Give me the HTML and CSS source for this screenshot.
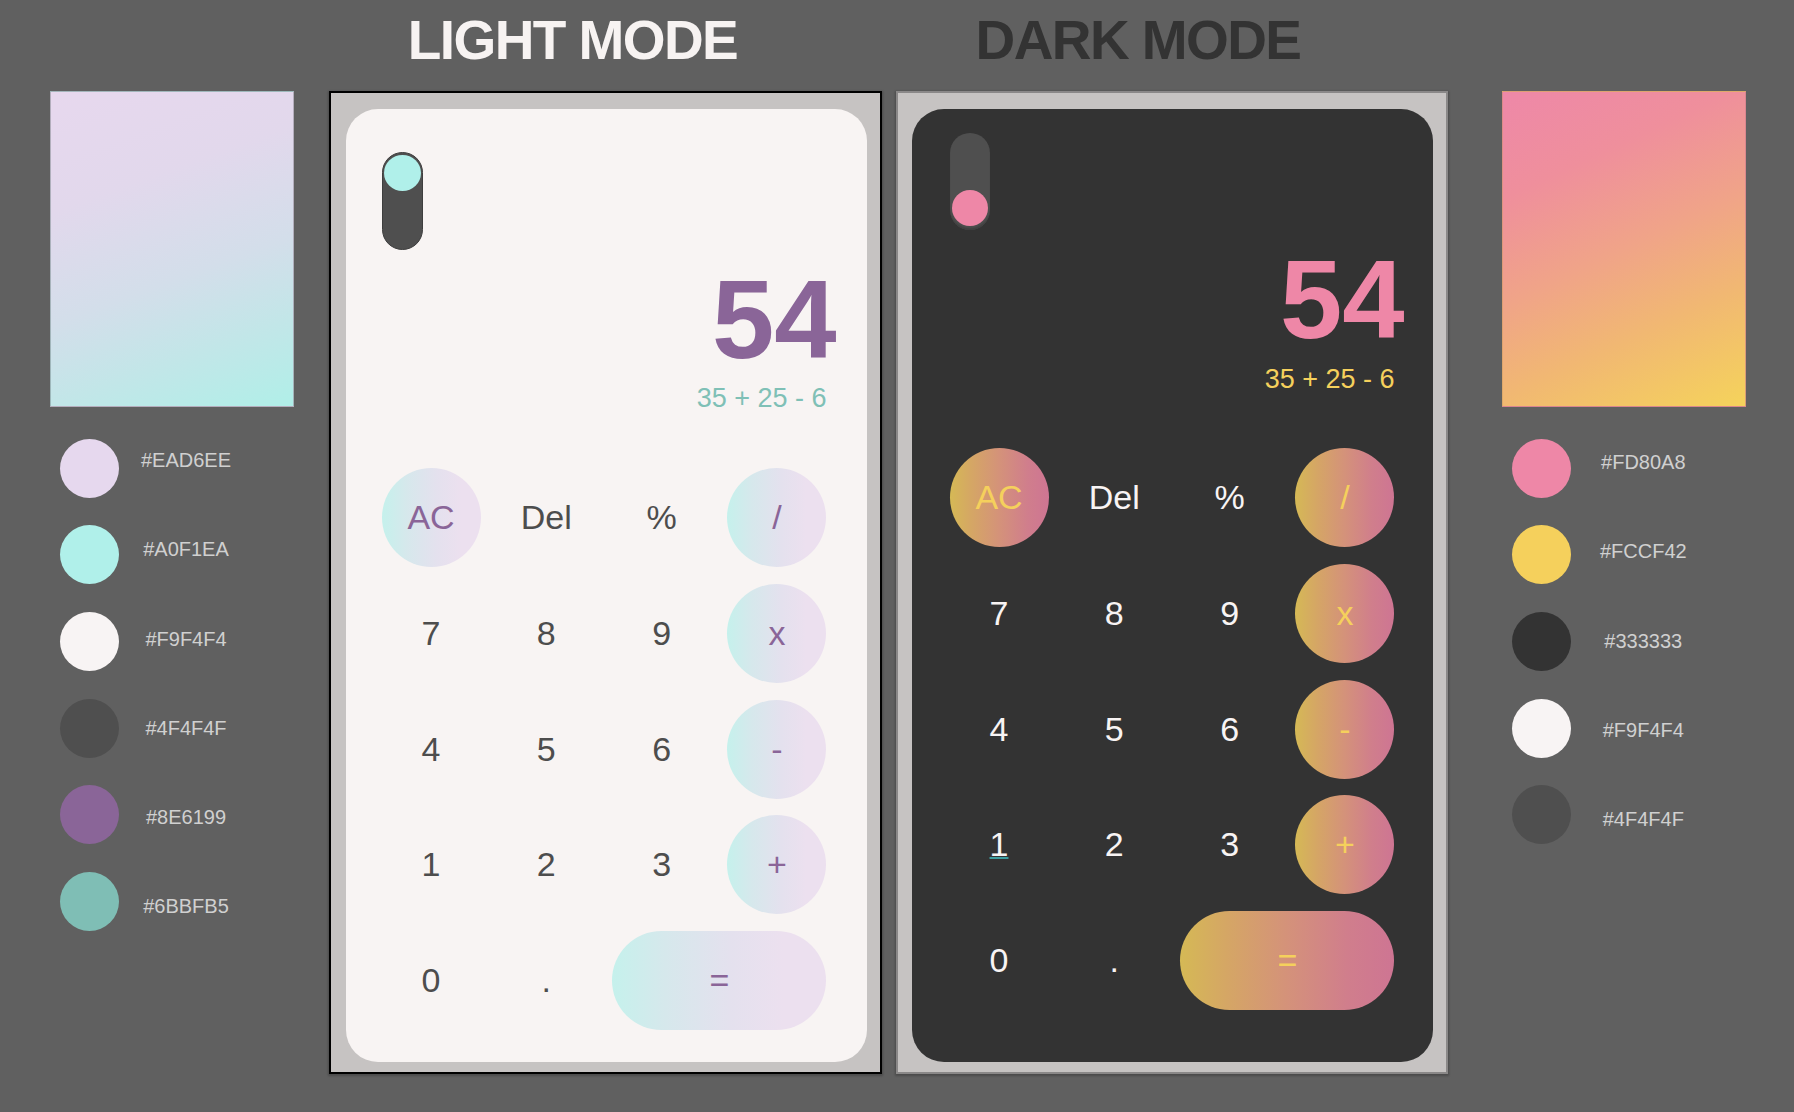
FILE: index.html
```html
<!DOCTYPE html>
<html lang="en">
<head>
<meta charset="utf-8">
<title>Calculator – Light &amp; Dark Mode</title>
<link rel="stylesheet" href="styles.css">
</head>
<body>
<div class="page">
  <aside class="palette palette--light">
    <div class="swatch swatch--light"></div>
    <div class="palette-list">
      <div class="dots">
        <span class="dot dot--lavender"></span>
        <span class="dot dot--aqua"></span>
        <span class="dot dot--white"></span>
        <span class="dot dot--grey"></span>
        <span class="dot dot--purple"></span>
        <span class="dot dot--teal"></span>
      </div>
      <div class="labels labels--light">
        <span class="label">#EAD6EE</span>
        <span class="label">#A0F1EA</span>
        <span class="label">#F9F4F4</span>
        <span class="label">#4F4F4F</span>
        <span class="label">#8E6199</span>
        <span class="label">#6BBFB5</span>
      </div>
    </div>
  </aside>

  <section class="mode mode--light">
    <h1 class="mode-title mode-title--light">LIGHT MODE</h1>
    <div class="frame frame--light">
      <div class="calc calc--light">
        <div class="toggle toggle--light"><span class="knob knob--light"></span></div>
        <div class="display">
          <div class="result">54</div>
          <div class="expr">35 + 25 - 6</div>
        </div>
        <div class="keys">
          <div class="key key--accent">AC</div>
          <div class="key">Del</div>
          <div class="key">%</div>
          <div class="key key--accent">/</div>
          <div class="key">7</div>
          <div class="key">8</div>
          <div class="key">9</div>
          <div class="key key--accent">x</div>
          <div class="key">4</div>
          <div class="key">5</div>
          <div class="key">6</div>
          <div class="key key--accent">-</div>
          <div class="key">1</div>
          <div class="key">2</div>
          <div class="key">3</div>
          <div class="key key--accent">+</div>
          <div class="key">0</div>
          <div class="key">.</div>
          <div class="key key--accent key--wide">=</div>
        </div>
      </div>
    </div>
  </section>

  <section class="mode mode--dark">
    <h1 class="mode-title mode-title--dark">DARK MODE</h1>
    <div class="frame frame--dark">
      <div class="calc calc--dark">
        <div class="toggle toggle--dark"><span class="knob knob--dark"></span></div>
        <div class="display">
          <div class="result">54</div>
          <div class="expr">35 + 25 - 6</div>
        </div>
        <div class="keys">
          <div class="key key--accent">AC</div>
          <div class="key">Del</div>
          <div class="key">%</div>
          <div class="key key--accent">/</div>
          <div class="key">7</div>
          <div class="key">8</div>
          <div class="key">9</div>
          <div class="key key--accent">x</div>
          <div class="key">4</div>
          <div class="key">5</div>
          <div class="key">6</div>
          <div class="key key--accent">-</div>
          <div class="key"><span class="focus-mark">1</span></div>
          <div class="key">2</div>
          <div class="key">3</div>
          <div class="key key--accent">+</div>
          <div class="key">0</div>
          <div class="key">.</div>
          <div class="key key--accent key--wide">=</div>
        </div>
      </div>
    </div>
  </section>

  <aside class="palette palette--dark">
    <div class="swatch swatch--dark"></div>
    <div class="palette-list">
      <div class="dots">
        <span class="dot dot--pink"></span>
        <span class="dot dot--yellow"></span>
        <span class="dot dot--charcoal"></span>
        <span class="dot dot--white"></span>
        <span class="dot dot--grey"></span>
      </div>
      <div class="labels labels--dark">
        <span class="label">#FD80A8</span>
        <span class="label">#FCCF42</span>
        <span class="label">#333333</span>
        <span class="label">#F9F4F4</span>
        <span class="label">#4F4F4F</span>
      </div>
    </div>
  </aside>
</div>
</body>
</html>
```

FILE: styles.css
```css
* { box-sizing: border-box; }

html, body {
  margin: 0;
  padding: 0;
}

body {
  background: #606060;
  font-family: "Liberation Sans", Arial, sans-serif;
  width: 1794px;
  height: 1112px;
  overflow: hidden;
}

.page {
  display: flex;
  align-items: flex-start;
  padding-left: 50px;
}

/* ---------- palettes ---------- */
.palette {
  width: 244px;
  margin-top: 91px;
  flex: none;
}
.palette--light { margin-right: 35px; }

.swatch {
  width: 244px;
  height: 316px;
  border: 1px solid rgba(140, 140, 150, 0.55);
}
.swatch--light {
  background: linear-gradient(160deg, #e7d8ee 0%, #e2d8ec 30%, #d3deea 58%, #c2e6e8 78%, #b0efe8 100%);
}
.swatch--dark {
  border-color: rgba(200, 130, 120, 0.5);
  background: linear-gradient(155deg, #ee88a8 0%, #ef8f9c 25%, #f0a488 50%, #f1b872 72%, #f5d35b 100%);
}

.palette-list {
  display: flex;
  align-items: flex-start;
}

.dots {
  display: flex;
  flex-direction: column;
  gap: 27.7px;
  margin-top: 31.7px;
  margin-left: 10px;
}
.dot {
  display: block;
  width: 59px;
  height: 59px;
  border-radius: 50%;
}
.dot--lavender { background: #e6d8ee; }
.dot--aqua { background: #b0f0ea; }
.dot--white { background: #f8f4f4; }
.dot--grey { background: #4f4f4f; }
.dot--purple { background: #8a6598; }
.dot--teal { background: #7fbeb5; }
.dot--pink { background: #ee87a7; }
.dot--yellow { background: #f5d05c; }
.dot--charcoal { background: #333333; }

.labels {
  display: flex;
  flex-direction: column;
  width: 120px;
}
.labels--light { margin-top: 8.8px; margin-left: 7px; }
.labels--dark { margin-top: 10.8px; margin-left: 12.3px; }

.label {
  height: 89.3px;
  display: flex;
  align-items: center;
  justify-content: center;
  font-size: 20px;
  color: #d0d0d0;
}

/* ---------- mode columns ---------- */
.mode { flex: none; }
.mode--light { width: 553px; margin-right: 14px; }
.mode--dark { width: 552px; margin-right: 54px; }

.mode-title {
  margin: 13px 0 23px;
  font-size: 55px;
  line-height: 55px;
  font-weight: 700;
  letter-spacing: -1.6px;
  text-align: center;
}
.mode-title--light { color: #f7f3f2; padding-right: 66px; }
.mode-title--dark { color: #333333; padding-right: 68px; }

.frame {
  background: #c6c3c2;
  border: 2px solid #000;
  padding: 16px 13px 10px 15px;
  box-shadow: 0 1px 2px 1px rgba(0, 0, 0, 0.22);
}
.frame--dark {
  border-color: #8a8888;
  padding-left: 14px;
}

/* ---------- calculator ---------- */
.calc {
  width: 521px;
  height: 953px;
  border-radius: 32px;
  display: flex;
  flex-direction: column;
}
.calc--light {
  background: #f8f4f3;
  padding: 43px 40.5px 0 35.5px;
}
.calc--dark {
  background: #333333;
  padding: 23.5px 38.5px 0 37.5px;
}

.toggle {
  display: flex;
  flex-direction: column;
  align-items: center;
  background: #4f4f4f;
  border-radius: 21px;
  flex: none;
}
.toggle--light {
  width: 41px;
  height: 97.5px;
  justify-content: flex-start;
  padding-top: 2.3px;
  border: 1px solid #3e3e3e;
}
.toggle--dark {
  width: 40px;
  height: 97.3px;
  justify-content: flex-end;
  padding-bottom: 4.3px;
  box-shadow: inset 0 -3px 2px -1px #3f3f3f;
}
.knob {
  display: block;
  border-radius: 50%;
}
.knob--light {
  width: 37px;
  height: 36px;
  background: #b0f0ea;
}
.knob--dark {
  width: 36px;
  height: 36px;
  background: #ee87a7;
}

.display {
  text-align: right;
}
.calc--light .display { margin-top: 14.4px; }
.calc--dark .display { margin-top: 14.7px; }

.result {
  font-size: 112px;
  line-height: 112px;
  font-weight: 700;
  margin-right: -10px;
}
.expr {
  margin-top: 9.4px;
  font-size: 27px;
  line-height: 27px;
}
.calc--light .result { color: #8a6598; }
.calc--light .expr { color: #7fc0b6; }
.calc--dark .result { color: #ee87a7; }
.calc--dark .expr { color: #f5d05c; }

.keys {
  display: grid;
  grid-template-columns: repeat(4, 99px);
  grid-auto-rows: 99px;
  column-gap: 16.33px;
  row-gap: 16.75px;
}
.calc--light .keys { margin-top: 55.9px; }
.calc--dark .keys { margin-top: 55.2px; }

.key {
  display: flex;
  align-items: center;
  justify-content: center;
  border-radius: 50%;
  font-size: 34px;
}
.key--wide {
  grid-column: span 2;
  border-radius: 50px;
}

.calc--light .key { color: #4d4d4d; }
.calc--light .key--accent {
  color: #8a6598;
  background: linear-gradient(90deg, #c5f1ec 0%, #d6e8ec 25%, #e4e1ee 55%, #ece0ef 80%, #ece0ef 100%);
}

.calc--dark .key { color: #f8f4f4; }
.calc--dark .key--accent {
  color: #f5d05c;
  background: linear-gradient(90deg, #d5b955 0%, #d5a665 22%, #d4927a 50%, #d07e8c 78%, #ce7593 100%);
}

.focus-mark {
  text-decoration: underline;
  text-decoration-color: #3e9ea0;
  text-decoration-thickness: 2px;
  text-underline-offset: 1px;
}
```
